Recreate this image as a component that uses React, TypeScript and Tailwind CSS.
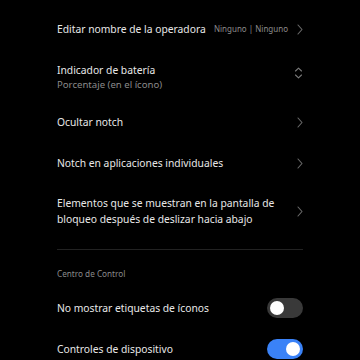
import React from 'react'

const font = { fontFamily: '"Noto Sans", "Liberation Sans", sans-serif' }

function Chevron() {
  return (
    <svg width="6" height="11" viewBox="0 0 6 11" className="shrink-0">
      <path d="M1 1 L5 5.5 L1 10" stroke="#6b6b6b" strokeWidth="1.1" fill="none" strokeLinecap="round" strokeLinejoin="round" />
    </svg>
  )
}

function UpDown() {
  return (
    <svg width="9" height="12" viewBox="0 0 9 12" className="shrink-0 mb-[8px]">
      <path d="M1.5 4 L4.5 1.2 L7.5 4" stroke="#7a7a7a" strokeWidth="1.1" fill="none" strokeLinecap="round" strokeLinejoin="round" />
      <path d="M1.5 8 L4.5 10.8 L7.5 8" stroke="#7a7a7a" strokeWidth="1.1" fill="none" strokeLinecap="round" strokeLinejoin="round" />
    </svg>
  )
}

function Toggle({ on }: { on: boolean }) {
  return (
    <div
      className={
        'w-[36px] h-[20px] rounded-full flex items-center px-[3px] shrink-0 ' +
        (on ? 'bg-[#3a82f7] justify-end' : 'bg-[#393939] justify-start')
      }
    >
      <div className="w-[14px] h-[14px] rounded-full bg-white" />
    </div>
  )
}

function Row({ title, right, h }: { title: React.ReactNode; right: React.ReactNode; h: string }) {
  return (
    <div className={'flex items-center justify-between ' + h}>
      <div className="text-[10.3px] text-[#e8e8e8] leading-[16px]">{title}</div>
      {right}
    </div>
  )
}

export default function App() {
  return (
    <div className="w-[360px] h-[360px] bg-black overflow-hidden" style={font}>
      <div className="px-[57px] pt-[9px]">
        <Row
          h="h-[40px]"
          title="Editar nombre de la operadora"
          right={
            <div className="flex items-center gap-[9px]">
              <span className="text-[8px] text-[#8c8c8c]">Ninguno | Ninguno</span>
              <Chevron />
            </div>
          }
        />
        <div className="flex items-center justify-between h-[55px]">
          <div className="flex flex-col">
            <span className="text-[10.3px] text-[#e8e8e8] leading-[16px]">Indicador de batería</span>
            <span className="text-[9.6px] text-[#8a8a8a] leading-[12px] mt-[1px]">Porcentaje (en el ícono)</span>
          </div>
          <UpDown />
        </div>
        <Row h="h-[36px]" title="Ocultar notch" right={<Chevron />} />
        <Row h="h-[46px]" title="Notch en aplicaciones individuales" right={<Chevron />} />
        <div className="flex items-center justify-between h-[50px]">
          <div className="text-[10.3px] text-[#e8e8e8] leading-[16px]">
            Elementos que se muestran en la pantalla de
            <br />
            bloqueo después de deslizar hacia abajo
          </div>
          <Chevron />
        </div>
        <div className="h-px bg-[#222222] mt-[13px]" />
        <div className="text-[8.2px] text-[#8a8a8a] mt-[18px] leading-[12px]">Centro de Control</div>
        <Row h="h-[40px] mt-[8px]" title="No mostrar etiquetas de íconos" right={<Toggle on={false} />} />
        <Row h="h-[42px]" title="Controles de dispositivo" right={<Toggle on={true} />} />
      </div>
    </div>
  )
}
